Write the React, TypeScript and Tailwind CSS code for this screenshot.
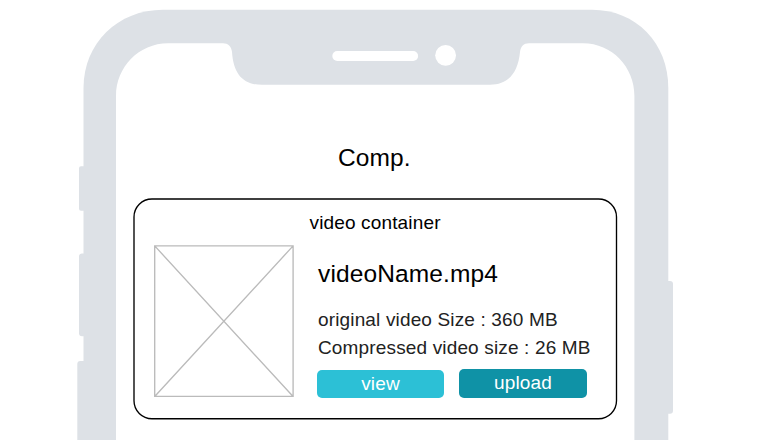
function DeviceFrame() {
  return (
    <svg
      className="col-start-1 row-start-1 block"
      width="781"
      height="440"
      viewBox="0 0 781 440"
      fill="#dde1e6"
      aria-hidden="true"
    >
      <rect x="79" y="166.3" width="10" height="44.4" rx="2" />
      <rect x="79" y="253.5" width="10" height="82.8" rx="3" />
      <rect x="77.3" y="361" width="12" height="90" rx="3" />
      <rect x="660" y="281" width="13" height="132.7" rx="3" />
      <path d="M83.5 450V88C83.5 43 118 9.7 163 9.7H592C636 9.7 668.3 43 668.3 88V450Z" />
      <path
        fill="#ffffff"
        d="M116 450V96C116 67 139 43.3 168 43.3H223C228 43.3 231.4 46.5 232 52C233.5 74 243 84.8 262 84.8H490C508 84.8 518 73 520 52C520.8 46.5 523.5 43.3 529 43.3H583C612 43.3 634.4 67 634.4 96V450Z"
      />
      <rect x="332.3" y="51" width="85.8" height="10" rx="5" fill="#ffffff" />
      <circle cx="445.6" cy="55.3" r="10.4" fill="#ffffff" />
    </svg>
  );
}

function CardOutline() {
  return (
    <svg
      className="col-start-1 row-start-1 block"
      width="485"
      height="222"
      viewBox="0 0 485 222"
      fill="none"
      stroke="#000000"
      strokeWidth="1.35"
      aria-hidden="true"
    >
      <rect x="1" y="1" width="482.5" height="219.7" rx="18" />
    </svg>
  );
}

function VideoThumbnail() {
  return (
    <svg
      className="block shrink-0"
      width="141"
      height="153"
      viewBox="0 0 141 153"
      fill="none"
      stroke="#bbbbbb"
      strokeWidth="1.35"
      aria-hidden="true"
    >
      <path d="M1.7 1.9H140.1V152.5H1.7ZL140.1 152.5M140.1 1.9L1.7 152.5" />
    </svg>
  );
}

function VideoCard() {
  return (
    <section className="ml-[133px] mt-[25px] grid h-[222px] w-[485px]">
      <CardOutline />
      <div className="col-start-1 row-start-1 pl-5">
        <h2 className="ml-[156.5px] mt-[13px] text-[19px] leading-6 tracking-[0.15px]">
          video container
        </h2>
        <div className="mt-[9px] flex">
          <VideoThumbnail />
          <div className="ml-[24px]">
            <h3 className="mt-[16px] text-[24.5px] leading-7 tracking-[0.13px]">videoName.mp4</h3>
            <div className="mt-[18px] text-[19px] leading-7 tracking-[0.15px] text-[#222222]">
              <p>original video Size : 360 MB</p>
              <p>Compressed video size : 26 MB</p>
            </div>
            <div className="-ml-px mt-[7px] flex gap-[15px] text-[19px] tracking-[0.15px] text-white">
              <button className="mt-px h-[28px] w-[127px] rounded-[5px] bg-[#2cc0d6] leading-[26px]">
                view
              </button>
              <button className="h-[29px] w-[128px] rounded-[5px] bg-[#0f92a6] pb-px leading-[26px]">
                upload
              </button>
            </div>
          </div>
        </div>
      </div>
    </section>
  );
}

export default function App() {
  return (
    <main className="grid h-[440px] w-[781px] overflow-hidden bg-white font-['Liberation_Sans',Arial,sans-serif] text-black">
      <DeviceFrame />
      <div className="z-10 col-start-1 row-start-1 whitespace-nowrap">
        <h1 className="ml-[338px] mt-[143px] text-[24.5px] leading-[30px] tracking-[0.13px]">
          Comp.
        </h1>
        <VideoCard />
      </div>
    </main>
  );
}
